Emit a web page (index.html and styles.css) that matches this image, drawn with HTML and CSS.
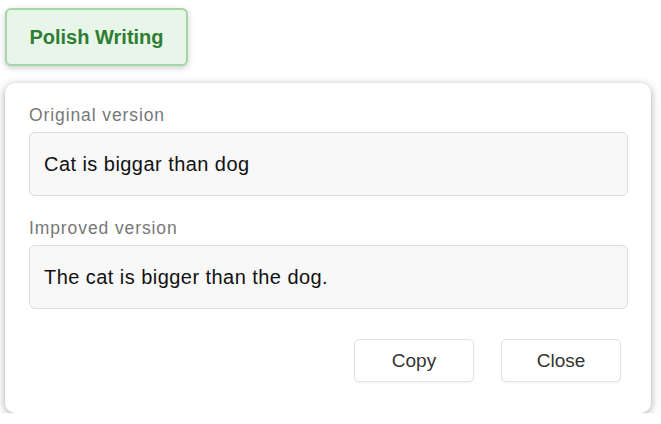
FILE: index.html
```html
<!DOCTYPE html>
<html>
<head>
<meta charset="utf-8">
<link rel="stylesheet" href="styles.css">
</head>
<body>
<div class="page">
  <button class="polish">Polish Writing</button>
  <div class="panel">
    <div class="label">Original version</div>
    <div class="box">Cat is biggar than dog</div>
    <div class="label second">Improved version</div>
    <div class="box">The cat is bigger than the dog.</div>
    <div class="actions">
      <button class="btn">Copy</button>
      <button class="btn">Close</button>
    </div>
  </div>
</div>
</body>
</html>
```

FILE: styles.css
```css
html, body {
  margin: 0;
  padding: 0;
  background: #ffffff;
}
body {
  font-family: "Liberation Sans", Arial, sans-serif;
}
.page {
  padding: 8px 10px 0 5px;
  display: flex;
  flex-direction: column;
  align-items: flex-start;
}
.polish {
  width: 183px;
  height: 58px;
  box-sizing: border-box;
  background: #e8f5e9;
  border: 2px solid #a5d6a7;
  border-radius: 6px;
  color: #2e7d32;
  font-family: "Liberation Sans", Arial, sans-serif;
  font-weight: bold;
  font-size: 20px;
  box-shadow: 0 2px 6px rgba(0,0,0,0.2);
  padding: 0;
}
.panel {
  margin-top: 17px;
  width: 646px;
  box-sizing: border-box;
  background: #fff;
  border-radius: 10px;
  box-shadow: 0 2px 8px rgba(0,0,0,0.35);
  padding: 22px 23px 31px 24px;
}
.label {
  font-size: 17.5px;
  color: #777;
  line-height: 20px;
  margin-bottom: 7px;
  letter-spacing: 0.9px;
}
.label.second {
  margin-top: 22px;
}
.box {
  height: 64px;
  box-sizing: border-box;
  background: #f8f8f8;
  border: 1px solid #dddddd;
  border-radius: 6px;
  padding: 0 14px;
  display: flex;
  align-items: center;
  font-size: 20px;
  letter-spacing: 0.45px;
  color: #111;
}
.actions {
  display: flex;
  justify-content: flex-end;
  gap: 27px;
  margin-top: 30px;
  padding-right: 7px;
}
.btn {
  width: 120px;
  height: 43px;
  background: #fff;
  border: 1px solid #e2e2e2;
  border-radius: 5px;
  font-family: "Liberation Sans", Arial, sans-serif;
  font-size: 19px;
  color: #333;
  box-shadow: 0 1px 2px rgba(0,0,0,0.06);
}
```
